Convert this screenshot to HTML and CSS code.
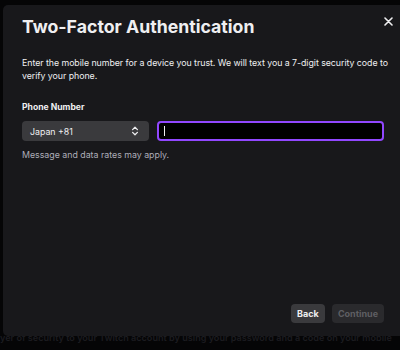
FILE: index.html
```html
<!DOCTYPE html>
<html>
<head>
<meta charset="utf-8">
<link rel="stylesheet" href="styles.css">
</head>
<body>
<div class="backdrop">
  <p class="behind">yer of security to your Twitch account by using your password and a code on your mobile</p>
</div>
<div class="modal">
  <button class="close" aria-label="Close">
    <svg width="9" height="9" viewBox="0 0 9 9"><path d="M1 1L8 8M8 1L1 8" stroke="#efeff1" stroke-width="1.6" stroke-linecap="round"/></svg>
  </button>
  <h1 class="title">Two-Factor Authentication</h1>
  <p class="desc">Enter the mobile number for a device you trust. We will text you a 7-digit security code to verify your phone.</p>
  <label class="label">Phone Number</label>
  <div class="row">
    <div class="select">
      <span>Japan +81</span>
      <svg width="8" height="10" viewBox="0 0 8 10"><path d="M1.6 3.6L4 1.3L6.4 3.6M1.6 6.4L4 8.7L6.4 6.4" fill="none" stroke="#efeff1" stroke-width="1.3" stroke-linecap="round" stroke-linejoin="round"/></svg>
    </div>
    <div class="input"><span class="caret"></span></div>
  </div>
  <p class="hint">Message and data rates may apply.</p>
  <div class="spacer"></div>
  <div class="actions">
    <button class="btn back">Back</button>
    <button class="btn cont">Continue</button>
  </div>
</div>
</body>
</html>
```
FILE: styles.css
```css
html, body { margin: 0; padding: 0; }
body {
  width: 400px; height: 350px; background: #050506; overflow: hidden;
  position: relative;
  font-family: Inter, "Noto Sans", sans-serif;
  color: #efeff1;
}
.backdrop { position: absolute; inset: 0; }
.behind {
  position: absolute; left: 0; top: 332px; margin: 0; white-space: nowrap;
  font-size: 9.1px; font-weight: 600; color: #1c1c20;
}
.modal {
  position: absolute; left: 3px; top: 5px; width: 397px; height: 331px;
  background: #18181b; border-radius: 5px 0 0 5px;
  box-sizing: border-box; padding: 10px 16px 13px 19px;
  display: flex; flex-direction: column;
}
.close {
  position: absolute; right: 6px; top: 10px; background: none; border: 0; padding: 0;
  width: 12px; height: 12px; display: flex; align-items: center; justify-content: center;
}
.title { margin: 0; font-size: 17.7px; font-weight: 700; line-height: 24px; letter-spacing: 0; }
.desc { margin: 16.5px -4px 0 0; font-size: 8.8px; line-height: 13px; color: #efeff1; letter-spacing: -0.04px; }
.label { margin-top: 19.5px; font-size: 8.6px; font-weight: 700; line-height: 12px; }
.row { display: flex; gap: 8px; margin-top: 8px; }
.select {
  width: 127px; height: 20px; background: #3a3a3d; border-radius: 4px;
  display: flex; align-items: center; justify-content: space-between;
  box-sizing: border-box; padding: 0 10px 0 8px;
  font-size: 8.8px;
}
.input {
  flex: 1; height: 20px; background: #000; border: 2px solid #9147ff; border-radius: 4px;
  box-sizing: border-box; display: flex; align-items: center; padding-left: 5px;
}
.caret { width: 1px; height: 10px; background: #efeff1; }
.hint { margin: 8px 0 0; font-size: 8.8px; line-height: 12px; color: #adadb8; }
.spacer { flex: 1; }
.actions { display: flex; justify-content: flex-end; gap: 7px; }
.btn {
  height: 19px; border: 0; border-radius: 4px; font-family: inherit; font-size: 9px; font-weight: 700;
  padding: 0 6px;
}
.back { background: #3a3a3d; color: #efeff1; min-width: 34px; }
.cont { background: #2a2a2d; color: #5f5f63; min-width: 52px; }
```
